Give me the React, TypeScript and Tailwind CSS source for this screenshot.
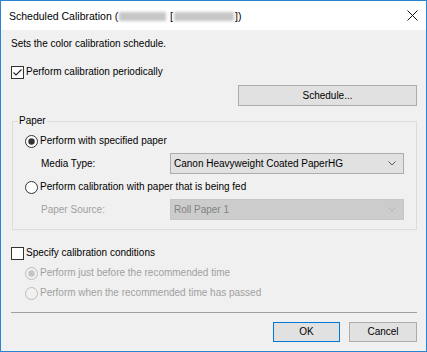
import React from 'react';

function CheckBox({ checked }: { checked?: boolean }) {
  return (
    <div className="flex h-[13px] w-[13px] shrink-0 items-center justify-center border border-[#333333] bg-white">
      {checked && (
        <svg width="11" height="11" viewBox="0 0 11 11">
          <path d="M1.5 5.5 L4 8 L9.5 2.5" fill="none" stroke="#222" strokeWidth="1.1" />
        </svg>
      )}
    </div>
  );
}

function Radio({ checked, disabled }: { checked?: boolean; disabled?: boolean }) {
  const ring = disabled ? '#bcbcbc' : '#333333';
  const dot = disabled ? '#c4c4c4' : '#333333';
  return (
    <svg width="13" height="13" viewBox="0 0 13 13" className="shrink-0">
      <circle cx="6.5" cy="6.5" r="6" fill={disabled ? '#f0f0f0' : '#ffffff'} stroke={ring} strokeWidth="1" />
      {checked && <circle cx="6.5" cy="6.5" r="3.2" fill={dot} />}
    </svg>
  );
}

function Combo({ value, disabled }: { value: string; disabled?: boolean }) {
  return (
    <div
      className={
        'flex h-[21px] w-[234px] items-center justify-between border pl-[3px] pr-[7px] ' +
        (disabled ? 'border-[#c6c6c6] bg-[#cccccc] text-[#838383]' : 'border-[#adadad] bg-[#e1e1e1] text-black')
      }
    >
      <span>{value}</span>
      <svg width="8" height="5" viewBox="0 0 8 5">
        <path d="M0.5 0.5 L4 4 L7.5 0.5" fill="none" stroke={disabled ? '#b4b4b4' : '#5a5a5a'} strokeWidth="1" />
      </svg>
    </div>
  );
}

function Blur({ w }: { w: string }) {
  return <span className={'mx-[1px] inline-block h-[9px] bg-[#c6c6c6] align-middle blur-[1.5px] ' + w} />;
}

export default function App() {
  return (
    <div className="flex h-[352px] w-[427px] flex-col border border-[#2a84d2] bg-[#f0f0f0] font-['Liberation_Sans',Arial,sans-serif] text-[10px] leading-[16px] text-black">
      <div className="flex h-[29px] shrink-0 items-center justify-between bg-white pl-[8px] pr-[8px]">
        <span className="text-[10.5px]">
          Scheduled Calibration (<Blur w="w-[47px]" /> [<Blur w="w-[60px]" />])
        </span>
        <svg width="11" height="11" viewBox="0 0 11 11">
          <path d="M0.5 0.5 L10.5 10.5 M10.5 0.5 L0.5 10.5" stroke="#111" strokeWidth="1" />
        </svg>
      </div>

      <div className="flex flex-col pl-[10px] pr-[9px] pt-[6px]">
        <div className="pl-[0px]">Sets the color calibration schedule.</div>

        <div className="mt-[12px] flex items-center gap-[2px]">
          <CheckBox checked />
          <span>Perform calibration periodically</span>
        </div>

        <button className="ml-auto mt-[5px] h-[21px] w-[179px] border border-[#adadad] bg-[#e1e1e1]">
          Schedule...
        </button>

        <div className="relative ml-[1px] mt-[15px] border border-[#dcdcdc] pb-[9px] pl-[12px] pr-[12px] pt-[11px]">
          <span className="absolute left-[5px] top-[-9px] bg-[#f0f0f0] px-[1px]">Paper</span>

          <div className="flex items-center gap-[2px]">
            <Radio checked />
            <span>Perform with specified paper</span>
          </div>
          <div className="mt-[4px] flex items-center pl-[16px]">
            <span className="w-[129px]">Media Type:</span>
            <Combo value="Canon Heavyweight Coated PaperHG" />
          </div>

          <div className="mt-[5px] flex items-center gap-[2px]">
            <Radio />
            <span>Perform calibration with paper that is being fed</span>
          </div>
          <div className="mt-[4px] flex items-center pl-[16px]">
            <span className="w-[129px] text-[#a0a0a0]">Paper Source:</span>
            <Combo value="Roll Paper 1" disabled />
          </div>
        </div>

        <div className="mt-[15px] flex items-center gap-[2px]">
          <CheckBox />
          <span>Specify calibration conditions</span>
        </div>
        <div className="mt-[4px] flex items-center gap-[2px] pl-[14px] text-[#a0a0a0]">
          <Radio checked disabled />
          <span>Perform just before the recommended time</span>
        </div>
        <div className="mt-[4px] flex items-center gap-[2px] pl-[14px] text-[#a0a0a0]">
          <Radio disabled />
          <span>Perform when the recommended time has passed</span>
        </div>

        <div className="mt-[11px] border-t border-[#a0a0a0]" />

        <div className="mt-[9px] flex justify-end gap-[9px]">
          <button className="h-[20px] w-[67px] border border-[#0078d7] bg-[#e1e1e1]">OK</button>
          <button className="h-[20px] w-[68px] border border-[#adadad] bg-[#e1e1e1]">Cancel</button>
        </div>
      </div>
    </div>
  );
}
